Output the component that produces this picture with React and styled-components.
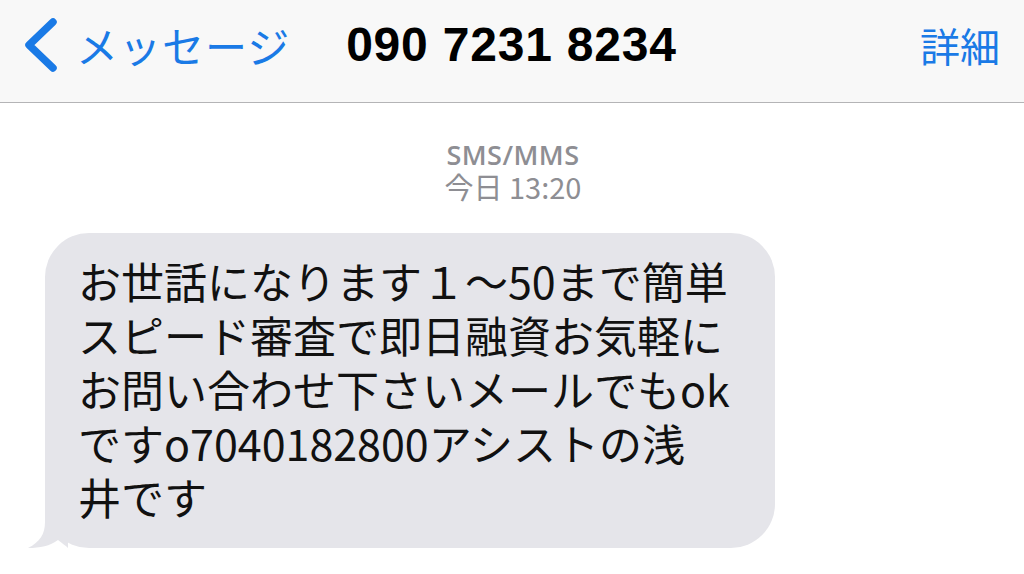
import React from 'react';
import styled, { createGlobalStyle } from 'styled-components';

const GlobalStyle = createGlobalStyle`
    html, body {
        margin: 0;
        padding: 0;
        background: #fff;
    }
    body {
        font-family: "Noto Sans CJK JP", "Noto Sans", sans-serif;
    }
`;

const lines = [
    'お世話になります１～50まで簡単',
    'スピード審査で即日融資お気軽に',
    'お問い合わせ下さいメールでもok',
    'ですo7040182800アシストの浅',
    '井です',
];

const App = () => {
    return (
        <>
            <GlobalStyle />
            <Screen>
                <NavBar>
                    <BackButton>
                        <svg width="38" height="54" viewBox="0 0 38 54">
                            <path d="M32 4 L8 27 L32 50" fill="none" stroke="#1a7ae6" strokeWidth="7.5" strokeLinecap="round" strokeLinejoin="round" />
                        </svg>
                        <BackLabel>メッセージ</BackLabel>
                    </BackButton>
                    <Title>090 7231 8234</Title>
                    <NavAction>詳細</NavAction>
                </NavBar>

                <Thread>
                    <Meta>
                        <Service>SMS/MMS</Service>
                        <Stamp>今日 13:20</Stamp>
                    </Meta>
                    <Bubble>
                        {lines.map((l, i) => (
                            <Line key={i}>{l}</Line>
                        ))}
                        <Tail width="40" height="44" viewBox="0 0 40 44">
                            <path d="M17 0 L17 18 C17 30 12 38 0 44 C12 44 22 42 30 36 C34 39 38 42 40 44 L40 0 Z" fill="#e5e5ea" />
                        </Tail>
                    </Bubble>
                </Thread>
            </Screen>
        </>
    );
};

export default App;

const Screen = styled.div`
    width: 1024px;
    height: 574px;
    overflow: hidden;
    background: #fff;
    display: flex;
    flex-direction: column;
`;

const NavBar = styled.header`
    height: 103px;
    box-sizing: border-box;
    background: #f8f8f8;
    border-bottom: 1px solid #b4b4b6;
    display: grid;
    grid-template-columns: 1fr auto 1fr;
    align-items: center;
    padding: 0 24px 12px 21px;
`;

const BackButton = styled.div`
    display: flex;
    align-items: center;
    gap: 17px;
    color: #1a7ae6;
`;

const BackLabel = styled.span`
    font-size: 42px;
    letter-spacing: 1px;
    line-height: 1;
`;

const Title = styled.div`
    font-family: "Liberation Sans", Arial, sans-serif;
    font-weight: 700;
    font-size: 48px;
    letter-spacing: 0.8px;
    color: #000;
    margin-left: 2px;
    line-height: 1;
`;

const NavAction = styled.span`
    justify-self: end;
    font-size: 40px;
    color: #1a7ae6;
    line-height: 1;
`;

const Thread = styled.main`
    display: flex;
    flex-direction: column;
    padding-top: 36px;
`;

const Meta = styled.div`
    display: flex;
    flex-direction: column;
    align-items: center;
    color: #8e8e93;
    line-height: 1.15;
    margin-left: 2px;
`;

const Service = styled.span`
    font-family: "Open Sans", "Liberation Sans", sans-serif;
    font-weight: 600;
    font-size: 27px;
    letter-spacing: 0.5px;
`;

const Stamp = styled.span`
    font-size: 29px;
    margin-top: 0;
`;

const Bubble = styled.div`
    position: relative;
    margin: 30px 0 0 45px;
    width: 730px;
    box-sizing: border-box;
    background: #e5e5ea;
    border-radius: 44px;
    padding: 20px 20px 25px 33px;
    display: flex;
    flex-direction: column;
`;

const Line = styled.span`
    font-size: 43px;
    line-height: 54px;
    color: #111;
    white-space: nowrap;
`;

const Tail = styled.svg`
    position: absolute;
    left: -17px;
    bottom: 0;
`;
